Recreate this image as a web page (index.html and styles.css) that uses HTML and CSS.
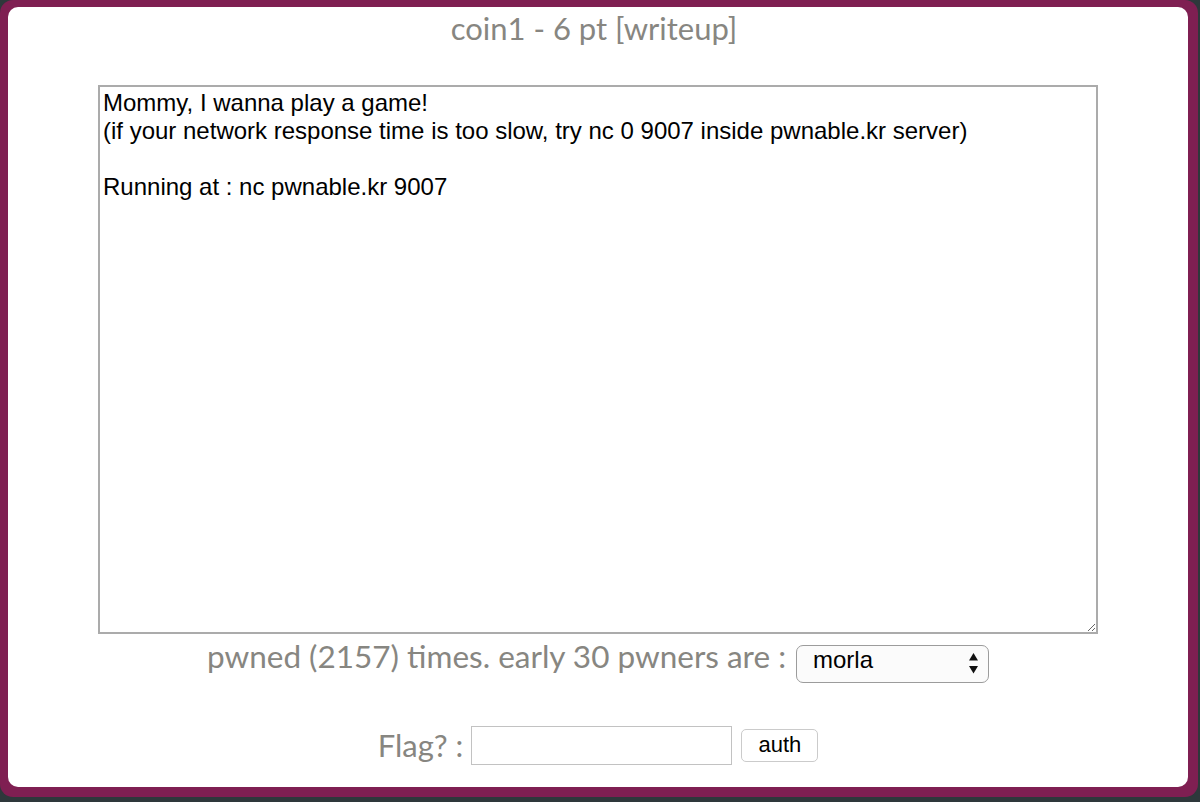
FILE: index.html
```html
<!DOCTYPE html>
<html>
<head>
<meta charset="utf-8">
<title>coin1</title>
<link rel="stylesheet" href="styles.css">
</head>
<body>
<div class="frame">
  <div class="panel">
    <div class="title">coin1 - 6 pt [writeup]</div>
    <textarea class="desc" readonly>Mommy, I wanna play a game!
(if your network response time is too slow, try nc 0 9007 inside pwnable.kr server)

Running at : nc pwnable.kr 9007</textarea>
    <div class="row pwned-row">
      <span class="label pwned-label">pwned (2157) times. early 30 pwners are :</span>
      <span class="select-wrap">
        <select class="pwners">
          <option>morla</option>
        </select>
        <svg class="arrows" width="11" height="21" viewBox="0 0 11 21"><path d="M5.5 0 L10 7.5 L1 7.5 Z" fill="#111"/><path d="M1 13 L10 13 L5.5 20.5 Z" fill="#111"/></svg>
      </span>
    </div>
    <div class="row flag-row">
      <span class="label">Flag? :</span>
      <input class="flag" type="text">
      <button class="auth">auth</button>
    </div>
  </div>
</div>
</body>
</html>
```

FILE: styles.css
```css
html, body {
  margin: 0;
  padding: 0;
}
body {
  background: #2e383b;
  width: 1200px;
  height: 802px;
  overflow: hidden;
}
.frame {
  width: 1198px;
  height: 797px;
  box-sizing: border-box;
  background: #7f1f52;
  border-radius: 13px;
  padding: 7px 10px 10px 8px;
}
.panel {
  width: 1180px;
  height: 780px;
  background: #ffffff;
  border-radius: 10px;
  display: flex;
  flex-direction: column;
  align-items: center;
  box-sizing: border-box;
  padding-top: 3px;
}
.title {
  font-family: Lato, "Noto Sans", sans-serif;
  font-size: 31px;
  line-height: 37px;
  color: #878681;
  padding-right: 8px;
}
.desc {
  margin-top: 38px;
  width: 1000px;
  height: 549px;
  box-sizing: border-box;
  border: 2px solid #ababab;
  padding: 2px 3px;
  font-family: "Liberation Sans", Arial, sans-serif;
  font-size: 24px;
  line-height: normal;
  color: #000;
  resize: both;
  outline: none;
}
.row {
  display: flex;
  justify-content: center;
}
.label {
  font-family: Lato, "Noto Sans", sans-serif;
  font-size: 31px;
  color: #878681;
}
.pwned-label {
  font-size: 31.5px;
}
.pwned-row {
  margin-top: 3px;
  align-items: baseline;
  gap: 10px;
}
.select-wrap {
  position: relative;
  display: inline-block;
}
.pwners {
  appearance: none;
  -webkit-appearance: none;
  width: 193px;
  height: 38px;
  box-sizing: border-box;
  border: 1.5px solid #9c9c9c;
  border-radius: 7px;
  background: #fbfbfb;
  padding: 0 0 8px 16px;
  font-family: "Liberation Sans", Arial, sans-serif;
  font-size: 24px;
  color: #000;
  outline: none;
}
.arrows {
  position: absolute;
  right: 10px;
  top: 8px;
  pointer-events: none;
}
.flag-row {
  margin-top: 43px;
  align-items: center;
}
.flag {
  margin-left: 8px;
  width: 261px;
  height: 39px;
  box-sizing: border-box;
  border: 1px solid #c2c2c2;
  padding: 0 4px;
  font-family: "Liberation Sans", Arial, sans-serif;
  font-size: 24px;
  outline: none;
}
.auth {
  margin-left: 9px;
  width: 77px;
  height: 33px;
  box-sizing: border-box;
  border: 1px solid #cbcbcb;
  border-radius: 5px;
  background: #fff;
  font-family: "Liberation Sans", Arial, sans-serif;
  font-size: 22px;
  color: #000;
  padding: 0;
}
```
